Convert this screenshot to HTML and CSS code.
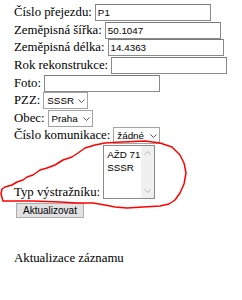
FILE: index.html
```html
<!DOCTYPE html>
<html lang="cs">
<head>
<meta charset="utf-8">
<title>Aktualizace záznamu</title>
<link rel="stylesheet" href="styles.css">
</head>
<body>
<form class="form">
  <div class="row"><label for="f-cislo">Číslo přejezdu:</label><input id="f-cislo" class="field" type="text" value="P1"></div>
  <div class="row"><label for="f-sirka">Zeměpisná šířka:</label><input id="f-sirka" class="field" type="text" value="50.1047"></div>
  <div class="row"><label for="f-delka">Zeměpisná délka:</label><input id="f-delka" class="field" type="text" value="14.4363"></div>
  <div class="row"><label for="f-rok">Rok rekonstrukce:</label><input id="f-rok" class="field" type="text"></div>
  <div class="row"><label for="f-foto">Foto:</label><input id="f-foto" class="field" type="text"></div>
  <div class="row"><label for="f-pzz">PZZ:</label><span class="select-wrap"><select id="f-pzz" class="select select-pzz"><option>SSSR</option><option>AŽD 71</option></select><svg class="chev" viewBox="0 0 7 4"><path d="M0.5 0.5 L3.5 3.5 L6.5 0.5"/></svg></span></div>
  <div class="row"><label for="f-obec">Obec:</label><span class="select-wrap"><select id="f-obec" class="select select-obec"><option>Praha</option></select><svg class="chev" viewBox="0 0 7 4"><path d="M0.5 0.5 L3.5 3.5 L6.5 0.5"/></svg></span></div>
  <div class="row"><label for="f-kom">Číslo komunikace:</label><span class="select-wrap"><select id="f-kom" class="select select-kom"><option>žádné</option></select><svg class="chev" viewBox="0 0 7 4"><path d="M0.5 0.5 L3.5 3.5 L6.5 0.5"/></svg></span></div>
  <div class="row row-list"><label>Typ výstražníku:</label>
    <div class="listbox" role="listbox" aria-multiselectable="true">
      <div class="opts">
        <div class="opt" role="option">AŽD 71</div>
        <div class="opt" role="option">SSSR</div>
      </div>
      <div class="sbar">
        <svg class="sarrow" viewBox="0 0 7 4"><path d="M0.5 3.5 L3.5 0.5 L6.5 3.5"/></svg>
        <svg class="sarrow" viewBox="0 0 7 4"><path d="M0.5 0.5 L3.5 3.5 L6.5 0.5"/></svg>
      </div>
    </div>
  </div>
  <div class="actions"><button type="button" class="btn">Aktualizovat</button></div>
</form>
<p class="status">Aktualizace záznamu</p>
<svg class="annot" viewBox="0 0 242 300" aria-hidden="true">
  <path d="M95,145 L85,148 L78,153 L72,157 L63,160 L55,165 L47,168 L40,170 L33,175 L27,177 L23,180 L17,182 L12,185 L5,187 L2,189 L1,194 L3,201 L10,201 L33,201 L60,202 L77,203 L93,203 L105,205 L115,207 L127,208 L143,207 L160,206 L169,204 L175,200 L180,193 L184,184 L186,173 L184,163 L180,155 L172,147 L160,143 L145,141 L122,142 L105,143 L95,145"/>
</svg>
</body>
</html>
```
FILE: styles.css
```css
* { box-sizing: border-box; }

body {
  margin: 0;
  padding: 4px 0 0 14px;
  font-family: "Liberation Serif", "Times New Roman", serif;
  font-size: 12.8px;
  color: #000;
  background: #fff;
}

.form {
  display: flex;
  flex-direction: column;
}

.row {
  display: flex;
  align-items: center;
  height: 17.6px;
}

.row label {
  margin-right: 3px;
  white-space: nowrap;
}

.field {
  width: 116px;
  height: 17px;
  margin: 0;
  padding: 0 2px;
  border: 1px solid #8a8a8a;
  border-top-color: #7a7a7a;
  background: #fff;
  font: 9.8px "Liberation Sans", Arial, sans-serif;
  color: #000;
}

.select-wrap {
  position: relative;
  display: inline-block;
  height: 17px;
}

.select {
  appearance: none;
  -webkit-appearance: none;
  height: 17px;
  margin: 0;
  padding: 0 0 0 3px;
  border: 1px solid #a3a3a3;
  border-radius: 0;
  background: #fff;
  font: 9.8px "Liberation Sans", Arial, sans-serif;
  color: #000;
}

.select-pzz { width: 45px; }
.select-obec { width: 45px; }
.select-kom { width: 47px; }

.chev {
  position: absolute;
  right: 3px;
  top: 7px;
  width: 7px;
  height: 4px;
  pointer-events: none;
  fill: none;
  stroke: #555;
  stroke-width: 1;
}

.row-list {
  height: auto;
  align-items: flex-end;
}

.row-list label {
  line-height: 14px;
}

.listbox {
  display: flex;
  width: 52px;
  height: 54px;
  border: 1px solid #8a8a8a;
  background: #fff;
}

.opts {
  flex: 1;
  min-width: 0;
  padding: 2px 0 0 3px;
  font: 9.8px "Liberation Sans", Arial, sans-serif;
  line-height: 13px;
  color: #000;
  white-space: nowrap;
  overflow: hidden;
}

.sbar {
  flex: none;
  width: 13px;
  background: #f0f0f0;
  display: flex;
  flex-direction: column;
  justify-content: space-between;
  align-items: center;
  padding: 5px 0;
}

.sarrow {
  width: 7px;
  height: 4px;
  fill: none;
  stroke: #b5b5b5;
  stroke-width: 1;
}

.actions {
  padding: 4px 0 0 2px;
}

.btn {
  width: 68px;
  height: 15px;
  margin: 0;
  padding: 0;
  border: 1px solid #adadad;
  border-radius: 0;
  background: #e1e1e1;
  font: 10px "Liberation Sans", Arial, sans-serif;
  line-height: 13px;
  color: #000;
}

.status {
  margin: 33px 0 0 0;
}

.annot {
  position: absolute;
  left: 0;
  top: 0;
  width: 242px;
  height: 300px;
  pointer-events: none;
  fill: none;
  stroke: #f00;
  stroke-width: 1.5;
  stroke-linejoin: round;
  stroke-linecap: round;
}
```
